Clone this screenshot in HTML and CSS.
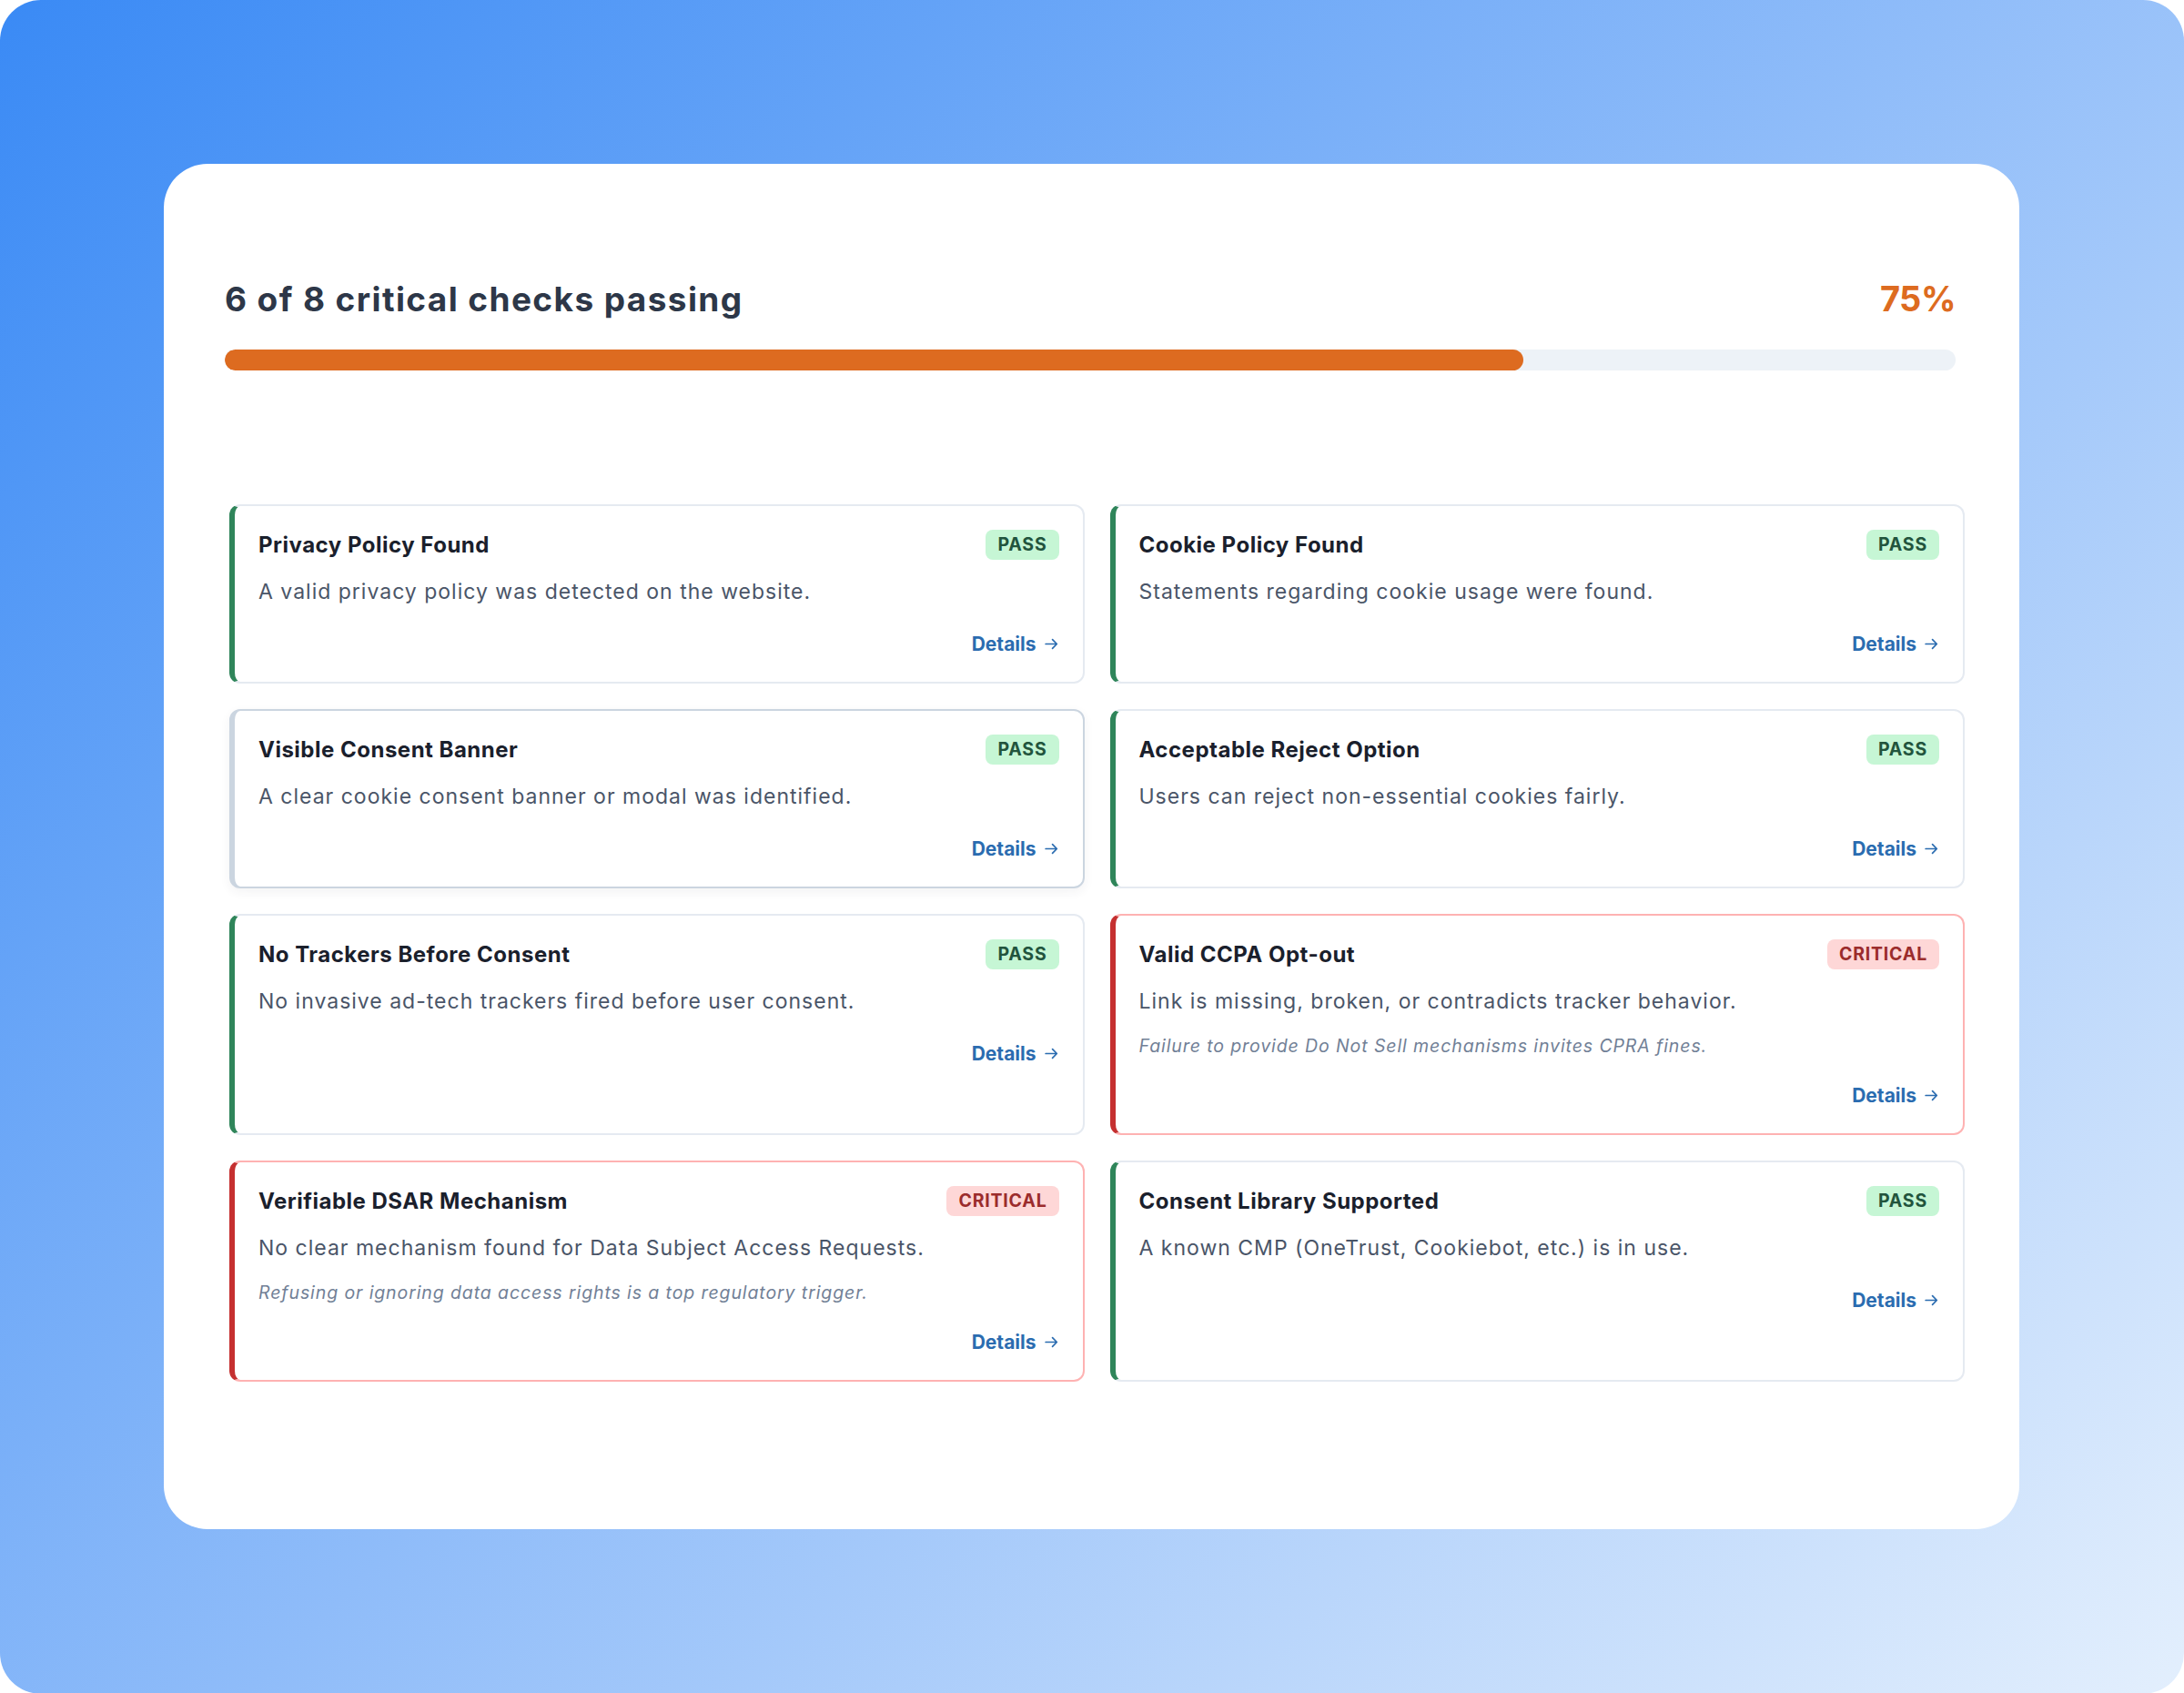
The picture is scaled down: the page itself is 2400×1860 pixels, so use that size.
FILE: index.html
```html
<!DOCTYPE html>
<html lang="en">
  <head>
    <meta charset="UTF-8" />
    <meta name="viewport" content="width=device-width, initial-scale=1.0" />
    <title>Compliance Checks</title>
    <link rel="stylesheet" href="styles.css">
  </head>
  <body>
    <div class="backdrop">
      <div class="panel">
        <div class="summary">
          <div class="summary-head">
            <h1 class="summary-title">6 of 8 critical checks passing</h1>
            <div class="summary-pct">75%</div>
          </div>
          <div class="progress">
            <div class="progress-fill" style="width: 75%"></div>
          </div>
        </div>

        <div class="check-grid">
          <div class="check check-pass">
            <div class="check-head">
              <div class="check-title">Privacy Policy Found</div>
              <span class="badge badge-pass">PASS</span>
            </div>
            <p class="check-desc">A valid privacy policy was detected on the website.</p>
            <div class="check-foot">
              <a class="details" href="#">Details <svg viewBox="0 0 16 16"><path d="M2 8h11M9 3.5 13.5 8 9 12.5" /></svg></a>
            </div>
          </div>

          <div class="check check-pass">
            <div class="check-head">
              <div class="check-title">Cookie Policy Found</div>
              <span class="badge badge-pass">PASS</span>
            </div>
            <p class="check-desc">Statements regarding cookie usage were found.</p>
            <div class="check-foot">
              <a class="details" href="#">Details <svg viewBox="0 0 16 16"><path d="M2 8h11M9 3.5 13.5 8 9 12.5" /></svg></a>
            </div>
          </div>

          <div class="check check-muted">
            <div class="check-head">
              <div class="check-title">Visible Consent Banner</div>
              <span class="badge badge-pass">PASS</span>
            </div>
            <p class="check-desc">A clear cookie consent banner or modal was identified.</p>
            <div class="check-foot">
              <a class="details" href="#">Details <svg viewBox="0 0 16 16"><path d="M2 8h11M9 3.5 13.5 8 9 12.5" /></svg></a>
            </div>
          </div>

          <div class="check check-pass">
            <div class="check-head">
              <div class="check-title">Acceptable Reject Option</div>
              <span class="badge badge-pass">PASS</span>
            </div>
            <p class="check-desc">Users can reject non-essential cookies fairly.</p>
            <div class="check-foot">
              <a class="details" href="#">Details <svg viewBox="0 0 16 16"><path d="M2 8h11M9 3.5 13.5 8 9 12.5" /></svg></a>
            </div>
          </div>

          <div class="check check-pass">
            <div class="check-head">
              <div class="check-title">No Trackers Before Consent</div>
              <span class="badge badge-pass">PASS</span>
            </div>
            <p class="check-desc">No invasive ad-tech trackers fired before user consent.</p>
            <div class="check-foot">
              <a class="details" href="#">Details <svg viewBox="0 0 16 16"><path d="M2 8h11M9 3.5 13.5 8 9 12.5" /></svg></a>
            </div>
          </div>

          <div class="check check-critical">
            <div class="check-head">
              <div class="check-title">Valid CCPA Opt-out</div>
              <span class="badge badge-critical">CRITICAL</span>
            </div>
            <p class="check-desc">Link is missing, broken, or contradicts tracker behavior.</p>
            <p class="check-note">Failure to provide Do Not Sell mechanisms invites CPRA fines.</p>
            <div class="check-foot">
              <a class="details" href="#">Details <svg viewBox="0 0 16 16"><path d="M2 8h11M9 3.5 13.5 8 9 12.5" /></svg></a>
            </div>
          </div>

          <div class="check check-critical">
            <div class="check-head">
              <div class="check-title">Verifiable DSAR Mechanism</div>
              <span class="badge badge-critical">CRITICAL</span>
            </div>
            <p class="check-desc">No clear mechanism found for Data Subject Access Requests.</p>
            <p class="check-note">Refusing or ignoring data access rights is a top regulatory trigger.</p>
            <div class="check-foot">
              <a class="details" href="#">Details <svg viewBox="0 0 16 16"><path d="M2 8h11M9 3.5 13.5 8 9 12.5" /></svg></a>
            </div>
          </div>

          <div class="check check-pass">
            <div class="check-head">
              <div class="check-title">Consent Library Supported</div>
              <span class="badge badge-pass">PASS</span>
            </div>
            <p class="check-desc">A known CMP (OneTrust, Cookiebot, etc.) is in use.</p>
            <div class="check-foot">
              <a class="details" href="#">Details <svg viewBox="0 0 16 16"><path d="M2 8h11M9 3.5 13.5 8 9 12.5" /></svg></a>
            </div>
          </div>
        </div>
      </div>
    </div>
  </body>
</html>
```

FILE: styles.css
```css
* {
  margin: 0;
  padding: 0;
  box-sizing: border-box;
}

body {
  font-family: Inter, "Noto Sans", sans-serif;
  background: #fff;
}

.backdrop {
  min-height: 100vh;
  padding: 180px 181px 181px 180px;
  border-radius: 45px;
  background: linear-gradient(135deg, #3a8af5 0%, #8fbcf9 50%, #e3effd 100%);
}

.panel {
  background: #fff;
  border-radius: 48px;
  padding: 125px 70px 162px 67px;
}

/* summary + progress */
.summary-head {
  display: flex;
  justify-content: space-between;
  align-items: baseline;
}

.summary-title {
  font-size: 37px;
  line-height: 43px;
  font-weight: 700;
  color: #2d3748;
  letter-spacing: 1.4px;
}

.summary-pct {
  font-size: 38px;
  font-weight: 700;
  color: #dd6b20;
  letter-spacing: -0.5px;
}

.progress {
  margin-top: 33px;
  height: 23px;
  border-radius: 12px;
  background: #edf2f7;
  overflow: hidden;
}

.progress-fill {
  height: 100%;
  border-radius: 12px;
  background: #dd6b20;
}

/* check cards */
.check-grid {
  margin: 147px -10px 0 5px;
  display: grid;
  grid-template-columns: 1fr 1fr;
  gap: 28px;
}

.check {
  background: #fff;
  border: 2px solid #e5eaf1;
  border-left: 6px solid #2f855a;
  border-radius: 12px;
  padding: 26px 26px 26px 26px;
}

.check-critical {
  border-color: #feb2b2;
  border-left-color: #c53030;
}

.check-muted {
  border-color: #cbd5e0;
  box-shadow: 0 4px 12px rgba(45, 55, 72, 0.06);
}

.check-head {
  display: flex;
  justify-content: space-between;
  align-items: center;
}

.check-title {
  font-size: 24px;
  font-weight: 700;
  color: #1a202c;
  letter-spacing: 0.5px;
}

.badge {
  height: 33px;
  line-height: 33px;
  padding: 0 13px;
  border-radius: 8px;
  font-size: 19.5px;
  font-weight: 700;
  letter-spacing: 0.8px;
}

.badge-pass {
  background: #c6f6d5;
  color: #22543d;
}

.badge-critical {
  background: #fed7d7;
  color: #9b2c2c;
}

.check-desc {
  margin-top: 17px;
  font-size: 23px;
  line-height: 36px;
  color: #4a5568;
  letter-spacing: 1px;
}

.check-note {
  margin-top: 16px;
  font-size: 19.5px;
  line-height: 30px;
  font-style: italic;
  color: #718096;
  letter-spacing: 0.9px;
}

.check-foot {
  margin-top: 24px;
  text-align: right;
}

.details {
  display: inline-flex;
  align-items: center;
  gap: 8px;
  font-size: 21px;
  line-height: 31px;
  font-weight: 700;
  color: #2b6cb0;
  text-decoration: none;
}

.details svg {
  width: 17px;
  height: 17px;
  fill: none;
  stroke: #2b6cb0;
  stroke-width: 1.6;
  stroke-linecap: round;
  stroke-linejoin: round;
}
```
